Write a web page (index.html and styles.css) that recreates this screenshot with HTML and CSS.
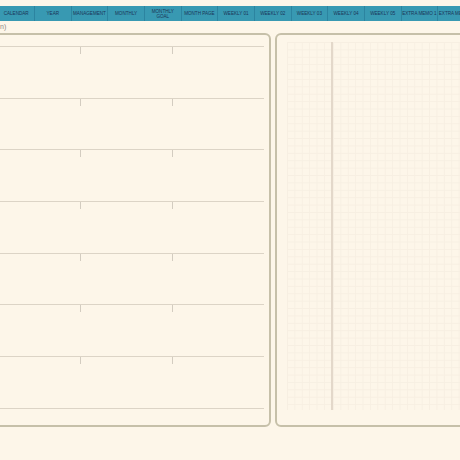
FILE: index.html
```html
<!DOCTYPE html>
<html>
<head>
<meta charset="utf-8">
<link rel="stylesheet" href="styles.css">
</head>
<body>
<nav class="tabs">
  <div class="tab">CALENDAR</div>
  <div class="tab">YEAR</div>
  <div class="tab">MANAGEMENT</div>
  <div class="tab">MONTHLY</div>
  <div class="tab">MONTHLY<br>GOAL</div>
  <div class="tab">MONTH PAGE</div>
  <div class="tab">WEEKLY 01</div>
  <div class="tab">WEEKLY 02</div>
  <div class="tab">WEEKLY 03</div>
  <div class="tab">WEEKLY 04</div>
  <div class="tab">WEEKLY 05</div>
  <div class="tab">EXTRA MEMO 1</div>
  <div class="tab">EXTRA MEMO 2</div>
</nav>
<div class="caption">n)</div>
<main class="pages">
  <section class="page left">
    <div class="row"><div class="sp1"></div><div class="tick"></div><div class="sp2"></div><div class="tick"></div></div>
    <div class="row"><div class="sp1"></div><div class="tick"></div><div class="sp2"></div><div class="tick"></div></div>
    <div class="row"><div class="sp1"></div><div class="tick"></div><div class="sp2"></div><div class="tick"></div></div>
    <div class="row"><div class="sp1"></div><div class="tick"></div><div class="sp2"></div><div class="tick"></div></div>
    <div class="row"><div class="sp1"></div><div class="tick"></div><div class="sp2"></div><div class="tick"></div></div>
    <div class="row"><div class="sp1"></div><div class="tick"></div><div class="sp2"></div><div class="tick"></div></div>
    <div class="row"><div class="sp1"></div><div class="tick"></div><div class="sp2"></div><div class="tick"></div></div>
    <div class="row-end"></div>
  </section>
  <section class="page right">
    <div class="grid">
      <div class="gcol"></div>
      <div class="divider"></div>
      <div class="gcol wide"></div>
    </div>
  </section>
</main>
</body>
</html>
```
FILE: styles.css
```css
html, body {
  margin: 0;
  padding: 0;
  background: #fdf6e9;
  width: 460px;
  height: 460px;
  overflow: hidden;
  font-family: "Liberation Sans", Arial, sans-serif;
}
.tabs {
  display: flex;
  margin-top: 6px;
  margin-left: -1.7px;
  height: 15px;
  background: #3899b2;
  width: 480px;
}
.tab {
  flex: 0 0 36.67px;
  box-sizing: border-box;
  border-right: 1px solid #2c84a0;
  display: flex;
  align-items: center;
  justify-content: center;
  text-align: center;
  font-size: 4.6px;
  line-height: 5px;
  color: #1b3557;
  white-space: nowrap;
  overflow: hidden;
}
.caption {
  height: 12px;
  font-size: 7px;
  line-height: 11px;
  color: #8c8a86;
}
.pages {
  display: flex;
  gap: 4px;
  height: 394px;
}
.page {
  flex: none;
  box-sizing: border-box;
  border: 2px solid #c6c0a9;
  border-radius: 6px;
  background: #fdf6e9;
  height: 394px;
}
.left {
  margin-left: -10px;
  width: 281px;
  padding: 11px 5px 0 0;
}
.row {
  height: 51.7px;
  border-top: 1px solid #dcd4c6;
  box-sizing: border-box;
  display: flex;
  align-items: flex-start;
}
.row-end {
  border-top: 1px solid #dcd4c6;
}
.sp1 { width: 88px; flex: none; }
.sp2 { width: 91px; flex: none; }
.tick {
  width: 1px;
  height: 7px;
  background: #d3ccc0;
  flex: none;
}
.right {
  width: 200px;
  padding: 7px 0 0 10px;
}
.grid {
  display: flex;
  height: 368px;
}
.gcol {
  width: 44px;
  background-image:
    linear-gradient(to right, #f7efe2 1px, transparent 1px),
    linear-gradient(to bottom, #f7efe2 1px, transparent 1px);
  background-size: 7.4px 7.4px;
}
.gcol.wide {
  flex: 1;
}
.divider {
  width: 1.5px;
  background: #e3d8ca;
  flex: none;
}
```
